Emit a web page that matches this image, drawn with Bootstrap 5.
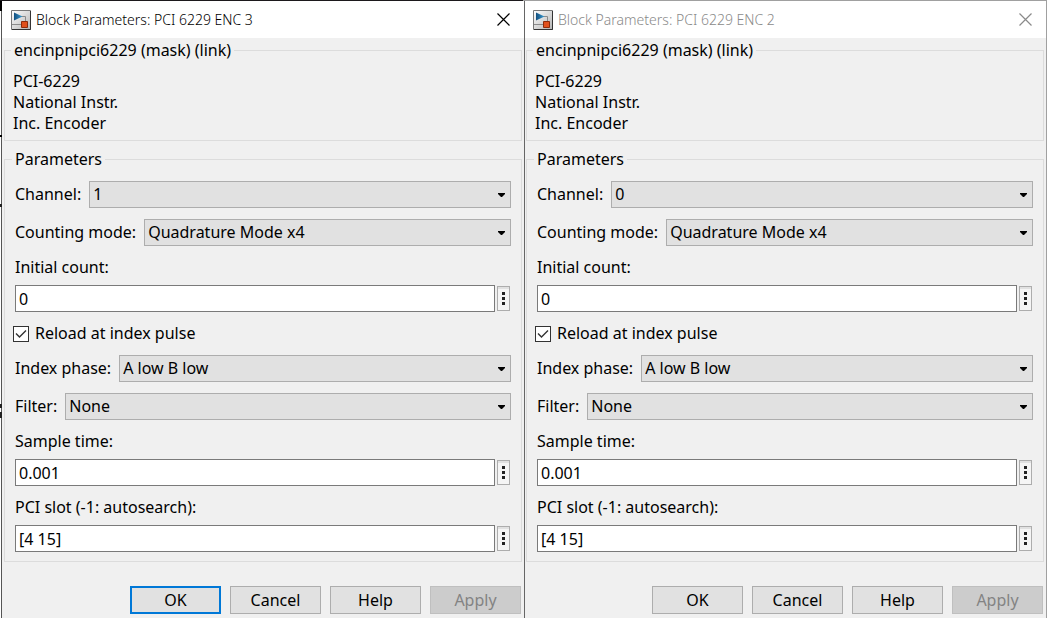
<!DOCTYPE html>
<html lang="en">
<head>
<meta charset="utf-8">
<meta name="viewport" content="width=device-width, initial-scale=1">
<title>Block Parameters</title>
<link href="https://cdn.jsdelivr.net/npm/bootstrap@5.3.0/dist/css/bootstrap.min.css" rel="stylesheet">
<style>
  body {
    font: 16px/21px "Noto Sans", "Open Sans", sans-serif;
    color: #000;
    background: #fff;
  }
  .workspace {
    padding: 1px 1px 0 2px;
    min-height: 100vh;
    background:
      linear-gradient(90deg, #1c191c 50%, #a0a0a0 50%) top / 100% 1px no-repeat,
      linear-gradient(#000, #000) 0 0 / 2px 11px no-repeat,
      linear-gradient(#000, #000) 0 135px / 2px 2px no-repeat,
      linear-gradient(#222, #222) 0 204px / 2px 3px no-repeat,
      linear-gradient(#222, #222) 0 404px / 2px 4px no-repeat,
      linear-gradient(#222, #222) 0 412px / 2px 6px no-repeat,
      linear-gradient(#555, #555) 1px 0 / 1px 100% no-repeat,
      linear-gradient(#a0a0a0, #a0a0a0) right / 1px 100% no-repeat,
      #fff;
  }
  .dialog { flex: 1 1 0; min-width: 0; background: #f0f0f0; }
  .dialog + .dialog { box-shadow: inset 1px 0 #666; }
  .titlebar { height: 37px; padding: 0 14px 0 9px; gap: 5px; background: #fff; }
  .dialog + .dialog .titlebar { box-shadow: inset 1px 0 #666; }
  .titlebar h1 { font-size: 14px; line-height: 21px; font-weight: 300; }
  .inactive h1, .inactive .close-btn { color: #8a8a8a; }
  .close-btn { border: 0; padding: 0; background: none; color: #000; line-height: 0; }
  .dialog-body { padding: 2px 2px 4px; }
  .group { border: 1px solid #dcdcdc; padding: 0 10px 9px; margin-bottom: 8px; }
  .group legend { font-size: 16px; line-height: 21px; padding: 0 3px; margin-left: -3px; }
  .info-group { padding: 0 8px 6px; }
  .info-group legend { margin-left: -2px; }
  .about { padding-top: 10px; }
  .field-stack { gap: 11px; padding-top: 11px; }
  .pick, .entry, .more-btn, .cmd { border-radius: 0; color: #000; box-shadow: none; }
  .pick {
    height: 27px; padding: 0 20px 0 3px; font-size: 16px; line-height: 21px;
    border: 1px solid #adadad;
    background: #e1e1e1 url("data:image/svg+xml,%3Csvg xmlns='http://www.w3.org/2000/svg' viewBox='0 0 7 4'%3E%3Cpath d='M0 0h7v1L4 4H3L0 1z'/%3E%3C/svg%3E") right 5px center / 7px 4px no-repeat;
  }
  .entry-row { gap: 2px; padding-right: 1px; margin-top: 7px; }
  .entry { height: 27px; min-height: 0; padding: 0 3px; font-size: 16px; line-height: 21px; border: 1px solid #7a7a7a; background: #fff; }
  .more-btn { width: 13px; height: 25px; padding: 0; border: 1px solid #adadad; background: linear-gradient(#e1e1e1 2px, #f5f5f5 2px); line-height: 0; flex: none; }
  .tick-row { gap: 6px; }
  .tick {
    width: 16px; height: 16px; margin: 0 0 0 -2px; flex: none; appearance: none;
    border: 1px solid #333;
    background: #fff url("data:image/svg+xml,%3Csvg xmlns='http://www.w3.org/2000/svg' viewBox='0 0 14 14'%3E%3Cpath d='M2 6.5 5.5 10 12 3.5' fill='none' stroke='%23333' stroke-width='1.4'/%3E%3C/svg%3E") center / 14px 14px no-repeat;
  }
  .commands { margin-top: 24px; gap: 9px; padding-right: 1px; }
  .cmd { width: 91px; height: 28px; padding: 0; border: 1px solid #adadad; background: #e1e1e1; font-size: 16px; line-height: 21px; }
  .cmd.primary { border: 2px solid #0078d7; }
  .cmd:disabled { background: #ccc; border-color: #bfbfbf; color: #838383; opacity: 1; }
</style>
</head>
<body>
<svg width="0" height="0" class="position-absolute" aria-hidden="true">
  <defs>
    <linearGradient id="tile" x1="0" y1="0" x2="1" y2="1"><stop offset="0" stop-color="#fff"/><stop offset="1" stop-color="#b4b4b4"/></linearGradient>
    <linearGradient id="tri" x1="0" y1="0" x2="1" y2="0"><stop offset="0" stop-color="#14507f"/><stop offset="1" stop-color="#3a9ad0"/></linearGradient>
  </defs>
  <symbol id="block-icon" viewBox="0 0 20 20">
    <path d="M.5.5h19v19H.5z" fill="url(#tile)" stroke="#777"/>
    <path d="M1 19.500h18.500V1" fill="none" stroke="#333"/>
    <path d="M10 6.500h4.500V11M1 14.500h9" fill="none" stroke="#8a8a8a"/>
    <path d="M3 2.500v8l8.500-4z" fill="url(#tri)"/>
    <path d="M10.500 11.500h6v6h-6z" fill="#e0501c" stroke="#8c2c0c"/>
  </symbol>
  <symbol id="close-icon" viewBox="0 0 13 13"><path d="M.5.5l12 12m0-12l-12 12" stroke="currentColor" stroke-width="1.2"/></symbol>
  <symbol id="dots-icon" viewBox="0 0 3 13"><path d="M0 0h3v3H0zM0 5h3v3H0zM0 10h3v3H0z" fill="#222"/></symbol>
</svg>

<main class="workspace d-flex">
  <section class="dialog d-flex flex-column" aria-labelledby="t3">
    <header class="titlebar d-flex align-items-center">
      <svg width="20" height="20" aria-hidden="true"><use href="#block-icon"/></svg>
      <h1 class="m-0 flex-grow-1 text-truncate" id="t3">Block Parameters: PCI 6229 ENC 3</h1>
      <button type="button" class="close-btn" aria-label="Close"><svg width="13" height="13"><use href="#close-icon"/></svg></button>
    </header>
    <form class="dialog-body">
      <fieldset class="group info-group">
        <legend class="float-none w-auto mb-0">encinpnipci6229 (mask) (link)</legend>
        <div class="about">PCI-6229<br>National Instr.<br>Inc. Encoder</div>
      </fieldset>
      <fieldset class="group mb-0">
        <legend class="float-none w-auto mb-0">Parameters</legend>
        <div class="field-stack d-flex flex-column">
          <div class="d-flex align-items-center gap-2"><label for="ch3">Channel:</label><select id="ch3" class="form-select pick flex-fill w-auto"><option>1</option></select></div>
          <div class="d-flex align-items-center gap-2"><label for="cm3">Counting mode:</label><select id="cm3" class="form-select pick flex-fill w-auto"><option>Quadrature Mode x4</option></select></div>
          <div><label for="ic3" class="d-block">Initial count:</label>
            <div class="entry-row d-flex align-items-center"><input id="ic3" type="text" class="form-control entry" value="0"><button type="button" class="more-btn" aria-label="More"><svg width="3" height="13"><use href="#dots-icon"/></svg></button></div></div>
          <div class="tick-row d-flex align-items-center"><input id="ri3" type="checkbox" class="tick" checked><label for="ri3">Reload at index pulse</label></div>
          <div class="d-flex align-items-center gap-2"><label for="ip3">Index phase:</label><select id="ip3" class="form-select pick flex-fill w-auto"><option>A low B low</option></select></div>
          <div class="d-flex align-items-center gap-2"><label for="fi3">Filter:</label><select id="fi3" class="form-select pick flex-fill w-auto"><option>None</option></select></div>
          <div><label for="st3" class="d-block">Sample time:</label>
            <div class="entry-row d-flex align-items-center"><input id="st3" type="text" class="form-control entry" value="0.001"><button type="button" class="more-btn" aria-label="More"><svg width="3" height="13"><use href="#dots-icon"/></svg></button></div></div>
          <div><label for="ps3" class="d-block">PCI slot (-1: autosearch):</label>
            <div class="entry-row d-flex align-items-center"><input id="ps3" type="text" class="form-control entry" value="[4 15]"><button type="button" class="more-btn" aria-label="More"><svg width="3" height="13"><use href="#dots-icon"/></svg></button></div></div>
        </div>
      </fieldset>
      <div class="commands d-flex justify-content-end">
        <button type="button" class="btn cmd primary">OK</button>
        <button type="button" class="btn cmd">Cancel</button>
        <button type="button" class="btn cmd">Help</button>
        <button type="button" class="btn cmd" disabled>Apply</button>
      </div>
    </form>
  </section>

  <section class="dialog inactive d-flex flex-column" aria-labelledby="t2">
    <header class="titlebar d-flex align-items-center">
      <svg width="20" height="20" aria-hidden="true"><use href="#block-icon"/></svg>
      <h1 class="m-0 flex-grow-1 text-truncate" id="t2">Block Parameters: PCI 6229 ENC 2</h1>
      <button type="button" class="close-btn" aria-label="Close"><svg width="13" height="13"><use href="#close-icon"/></svg></button>
    </header>
    <form class="dialog-body">
      <fieldset class="group info-group">
        <legend class="float-none w-auto mb-0">encinpnipci6229 (mask) (link)</legend>
        <div class="about">PCI-6229<br>National Instr.<br>Inc. Encoder</div>
      </fieldset>
      <fieldset class="group mb-0">
        <legend class="float-none w-auto mb-0">Parameters</legend>
        <div class="field-stack d-flex flex-column">
          <div class="d-flex align-items-center gap-2"><label for="ch2">Channel:</label><select id="ch2" class="form-select pick flex-fill w-auto"><option>0</option></select></div>
          <div class="d-flex align-items-center gap-2"><label for="cm2">Counting mode:</label><select id="cm2" class="form-select pick flex-fill w-auto"><option>Quadrature Mode x4</option></select></div>
          <div><label for="ic2" class="d-block">Initial count:</label>
            <div class="entry-row d-flex align-items-center"><input id="ic2" type="text" class="form-control entry" value="0"><button type="button" class="more-btn" aria-label="More"><svg width="3" height="13"><use href="#dots-icon"/></svg></button></div></div>
          <div class="tick-row d-flex align-items-center"><input id="ri2" type="checkbox" class="tick" checked><label for="ri2">Reload at index pulse</label></div>
          <div class="d-flex align-items-center gap-2"><label for="ip2">Index phase:</label><select id="ip2" class="form-select pick flex-fill w-auto"><option>A low B low</option></select></div>
          <div class="d-flex align-items-center gap-2"><label for="fi2">Filter:</label><select id="fi2" class="form-select pick flex-fill w-auto"><option>None</option></select></div>
          <div><label for="st2" class="d-block">Sample time:</label>
            <div class="entry-row d-flex align-items-center"><input id="st2" type="text" class="form-control entry" value="0.001"><button type="button" class="more-btn" aria-label="More"><svg width="3" height="13"><use href="#dots-icon"/></svg></button></div></div>
          <div><label for="ps2" class="d-block">PCI slot (-1: autosearch):</label>
            <div class="entry-row d-flex align-items-center"><input id="ps2" type="text" class="form-control entry" value="[4 15]"><button type="button" class="more-btn" aria-label="More"><svg width="3" height="13"><use href="#dots-icon"/></svg></button></div></div>
        </div>
      </fieldset>
      <div class="commands d-flex justify-content-end">
        <button type="button" class="btn cmd">OK</button>
        <button type="button" class="btn cmd">Cancel</button>
        <button type="button" class="btn cmd">Help</button>
        <button type="button" class="btn cmd" disabled>Apply</button>
      </div>
    </form>
  </section>
</main>
<script src="https://cdn.jsdelivr.net/npm/bootstrap@5.3.0/dist/js/bootstrap.bundle.min.js"></script>
</body>
</html>
